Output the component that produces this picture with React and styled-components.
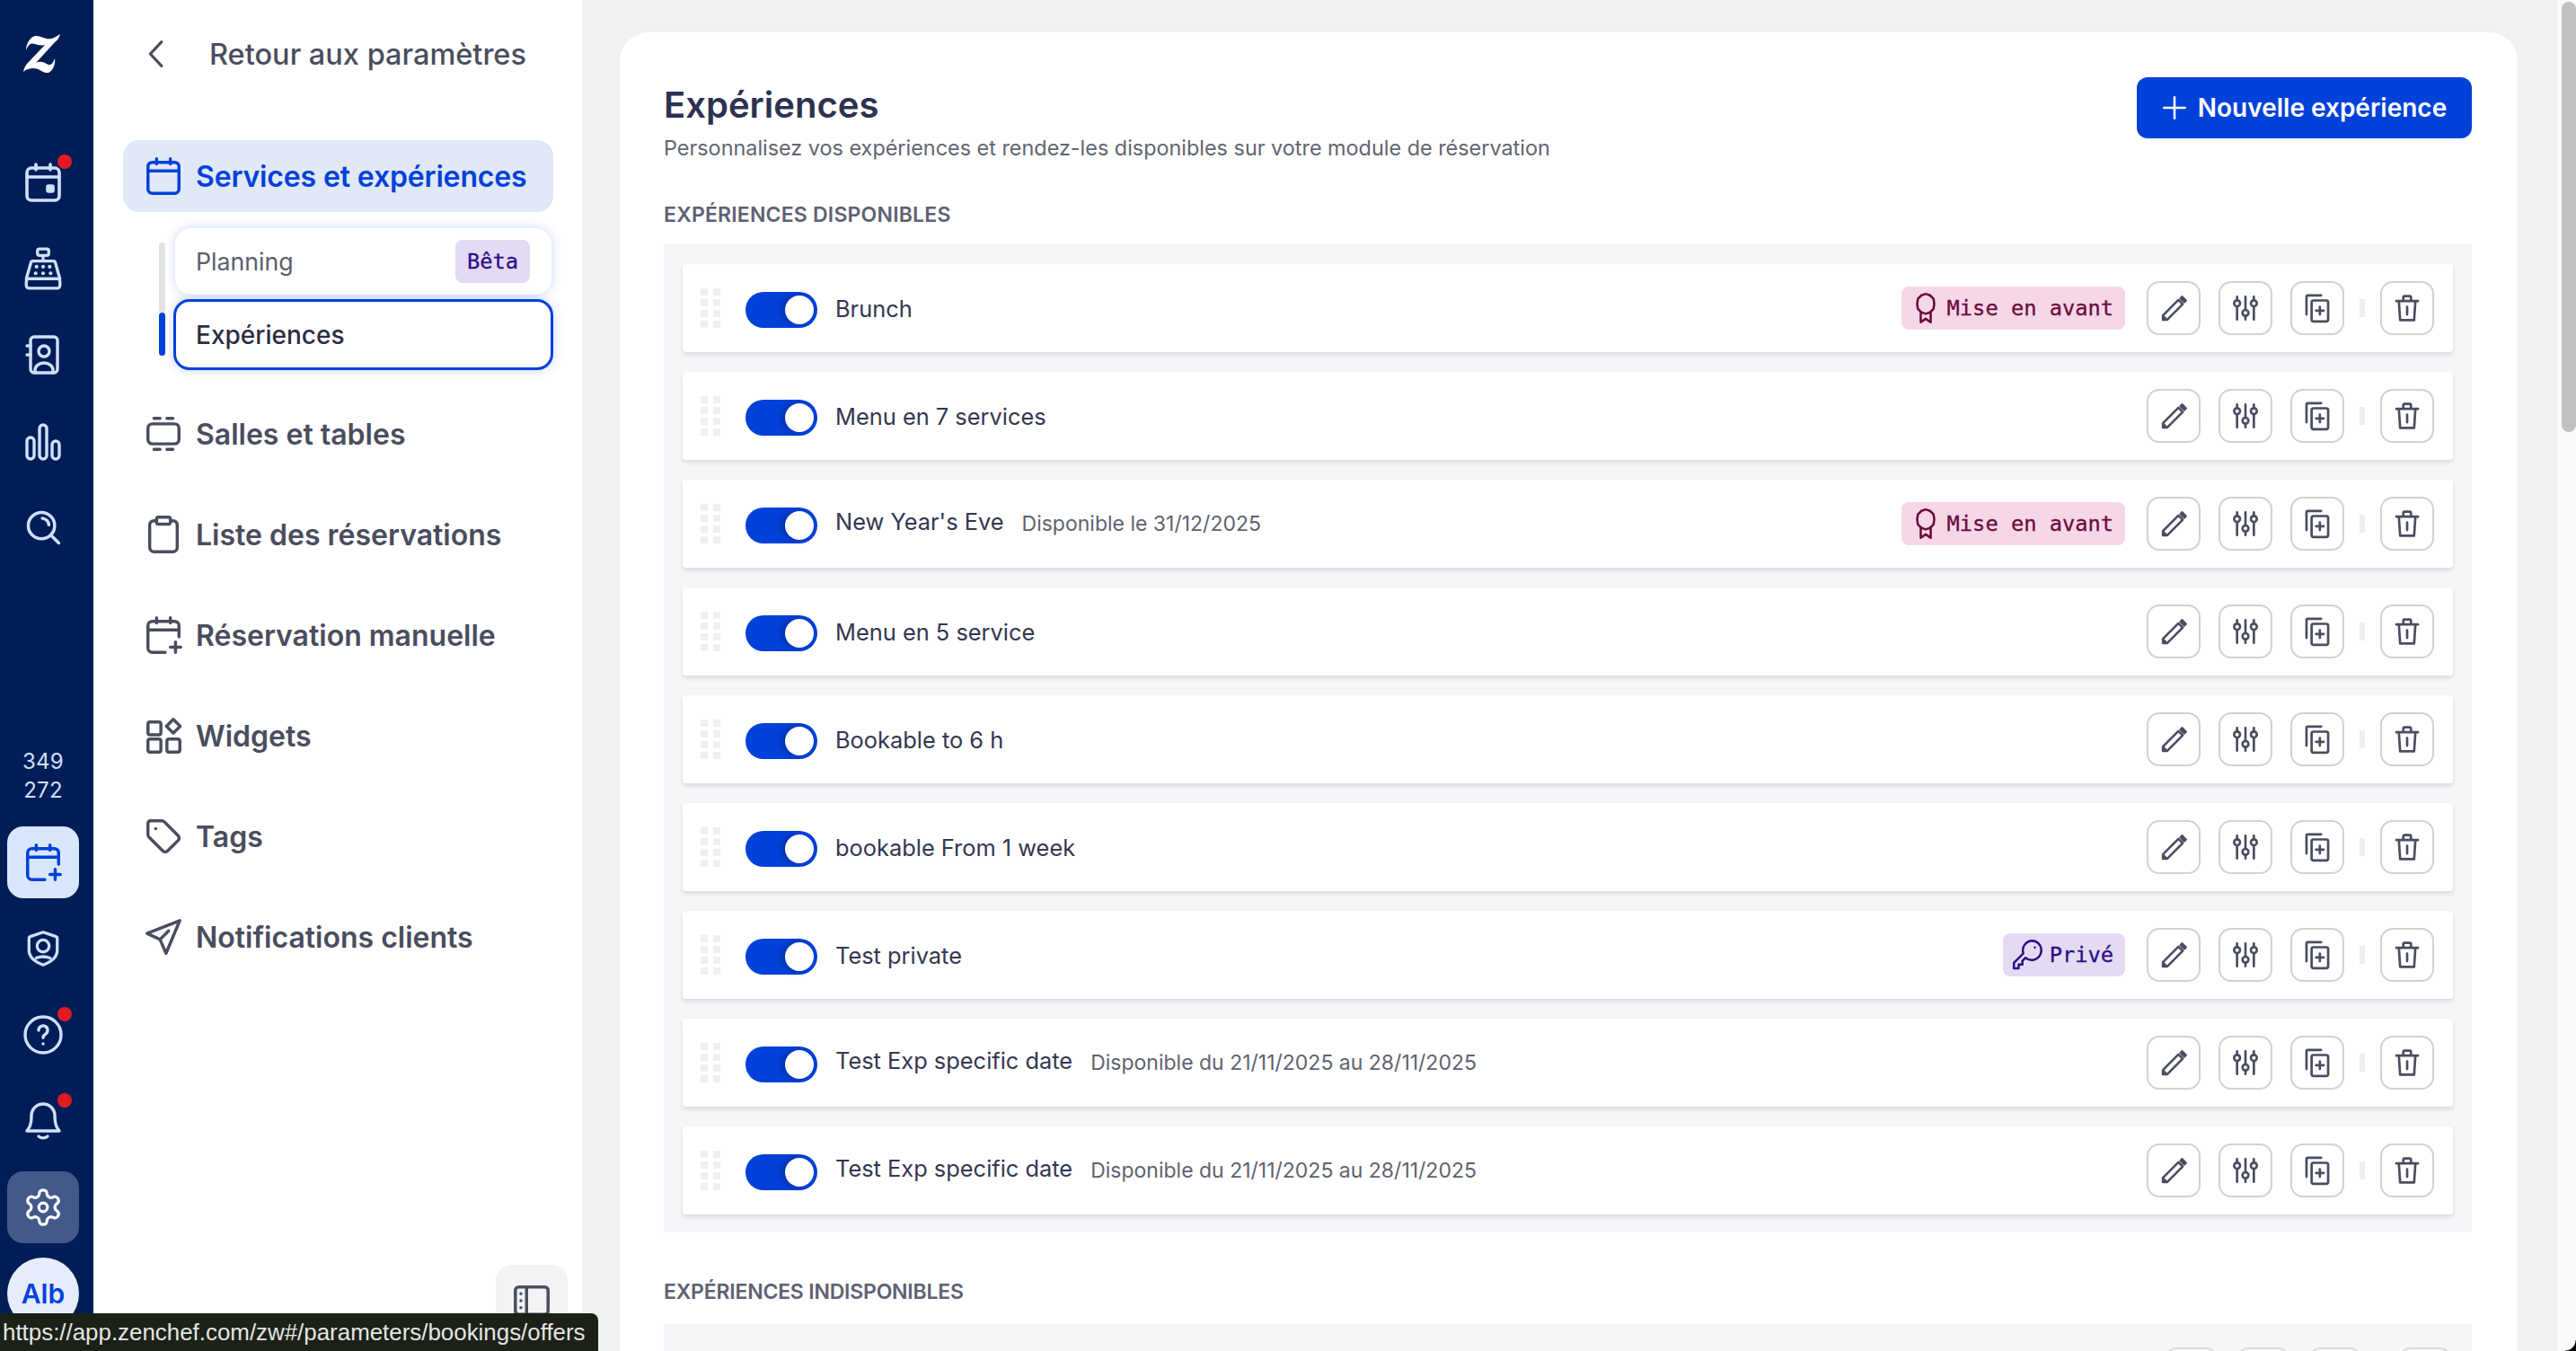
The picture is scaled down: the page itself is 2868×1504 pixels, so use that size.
import React from 'react';
import styled, { createGlobalStyle } from 'styled-components';

const GlobalStyle = createGlobalStyle`
  html, body { margin: 0; padding: 0; height: 100%; }
  body { font-family: Inter, "Noto Sans", sans-serif; background: #f0f1f3; overflow: hidden; }
  * { box-sizing: border-box; }
`;

const Page = styled.div`
  position: relative;
  display: flex;
  width: 2868px;
  height: 1504px;
  overflow: hidden;
  background: #f0f1f3;
`;

/* rail */
const Rail = styled.nav`
  flex: 0 0 104px;
  display: flex;
  flex-direction: column;
  justify-content: space-between;
  align-items: center;
  background: #011d57;
  padding: 36px 8px 24px 0;
  color: #cfe0fa;
`;
const RailGroup = styled.div`
  display: flex;
  flex-direction: column;
  align-items: center;
  gap: 16px;
`;
const LogoSlot = styled.div`
  height: 48px;
  margin-bottom: 63px;
  display: flex;
  align-items: center;
`;
const RailSlot = styled.div`
  position: relative;
  width: 80px;
  height: 80px;
  display: flex;
  align-items: center;
  justify-content: center;
  border-radius: 18px;
  color: ${p => (p.$variant === 'on' ? '#0041d9' : p.$variant === 'settings' ? '#ffffff' : '#cfe0fa')};
  background: ${p => (p.$variant === 'on' ? '#d8e7fc' : p.$variant === 'settings' ? '#43598a' : 'transparent')};
`;
const Dot = styled.span`
  position: absolute;
  top: 9px;
  right: 8px;
  width: 16px;
  height: 16px;
  border-radius: 50%;
  background: #e01b22;
`;
const Counter = styled.div`
  font-size: 24px;
  line-height: 32px;
  letter-spacing: 0.2px;
  text-align: center;
  margin-bottom: 8px;
`;
const Avatar = styled.div`
  width: 80px;
  height: 80px;
  border-radius: 50%;
  background: #e6edfa;
  color: #0041d9;
  font-size: 30px;
  font-weight: 600;
  display: flex;
  align-items: center;
  justify-content: center;
`;

/* settings sidebar */
const Side = styled.aside`
  flex: 0 0 544px;
  display: flex;
  flex-direction: column;
  background: #fff;
  color: #4a4d5e;
`;
const BackRow = styled.div`
  height: 120px;
  margin-bottom: 36px;
  padding-left: 50px;
  display: flex;
  align-items: center;
  gap: 39px;
  font-size: 32.5px;
  font-weight: 500;
`;
const NavList = styled.div`
  width: 479px;
  margin-left: 33px;
  display: flex;
  flex-direction: column;
`;
const NavItem = styled.div`
  height: 80px;
  margin-bottom: ${p => (p.$active ? '18px' : '32px')};
  padding-left: 22px;
  display: flex;
  align-items: center;
  gap: 13px;
  border-radius: 18px;
  font-size: 32px;
  font-weight: 600;
  letter-spacing: ${p => (p.$active ? '-0.15px' : '0')};
  color: ${p => (p.$active ? '#0041d9' : '#4a4d5e')};
  background: ${p => (p.$active ? '#e1e8f6' : 'transparent')};
`;
const SubGroup = styled.div`
  display: flex;
  margin-bottom: 31px;
  padding-left: 40px;
`;
const Track = styled.div`
  width: 7px;
  margin-top: 16px;
  margin-bottom: 16px;
  display: flex;
  flex-direction: column;
`;
const TrackPart = styled.div`
  flex: ${p => (p.$on ? '0 0 48px' : '1')};
  border-radius: 4px;
  background: ${p => (p.$on ? '#0041d9' : '#e2e2e4')};
`;
const SubList = styled.div`
  flex: 1;
  margin-left: 9px;
  display: flex;
  flex-direction: column;
  gap: 5px;
`;
const SubItem = styled.div`
  height: ${p => (p.$active ? '79px' : '74px')};
  margin: ${p => (p.$active ? '0' : '0 2px')};
  padding: 0 ${p => (p.$active ? '22px' : '24px')} 0 ${p => (p.$active ? '22px' : '23px')};
  display: flex;
  align-items: center;
  justify-content: space-between;
  border-radius: 18px;
  background: #fff;
  border: ${p => (p.$active ? '3px solid #0041d9' : 'none')};
  box-shadow: 0 0 12px rgba(0, 65, 217, 0.22);
  font-size: ${p => (p.$active ? '28px' : '26.7px')};
  font-weight: ${p => (p.$active ? 500 : 400)};
  color: ${p => (p.$active ? '#2b2e41' : '#5a5d6c')};
`;
const Badge = styled.span`
  height: 48px;
  padding: 0 13px;
  display: inline-flex;
  align-items: center;
  flex: none;
  border-radius: 8px;
  font-family: "DejaVu Sans Mono", "Liberation Mono", monospace;
  font-size: 23.7px;
  -webkit-text-stroke: 0.3px currentColor;
  background: ${p => (p.$pink ? '#f6d7e7' : '#e4daf4')};
  color: ${p => (p.$pink ? '#6b0a3d' : '#2a0f85')};
  margin-right: ${p => (p.$inRow ? '4px' : '0')};
`;
const BadgeIcon = styled.span`
  display: flex;
  margin: 0 ${p => p.$after} 0 ${p => p.$before};
`;
const CollapseBtn = styled.div`
  width: 80px;
  height: 80px;
  margin: auto 16px 16px auto;
  display: flex;
  align-items: center;
  justify-content: center;
  border-radius: 18px;
  background: #f3f3f5;
  color: #4a4d5e;
`;

/* content */
const Main = styled.main`
  flex: 1;
  min-width: 0;
  padding: 36px 43px 0 42px;
`;
const Card = styled.section`
  height: 1600px;
  padding: 50px 51px 0 49px;
  background: #fff;
  border-radius: 32px 32px 0 0;
`;
const Head = styled.header`
  display: flex;
  justify-content: space-between;
  align-items: flex-start;
`;
const Title = styled.h1`
  margin: 2px 0 0;
  font-size: 40px;
  line-height: 58px;
  font-weight: 600;
  color: #2d3150;
`;
const Subtitle = styled.p`
  margin: 0;
  font-size: 23.4px;
  line-height: 38px;
  color: #62656f;
`;
const PrimaryBtn = styled.button`
  width: 373px;
  height: 68px;
  border: 0;
  border-radius: 12px;
  display: flex;
  align-items: center;
  justify-content: center;
  gap: 12px;
  background: #0041d9;
  color: #fff;
  font-family: inherit;
  font-size: 28px;
  font-weight: 600;
`;
const SectionLabel = styled.h2`
  margin: ${p => (p.$second ? '52px' : '41px')} 0 ${p => (p.$second ? '22px' : '19px')};
  font-size: 23px;
  line-height: 28px;
  font-weight: 600;
  letter-spacing: ${p => (p.$second ? '-0.2px' : '0.2px')};
  text-transform: uppercase;
  color: #5d6172;
`;
const RowList = styled.div`
  display: flex;
  flex-direction: column;
  gap: 22px;
  padding: 22px 21px 20px;
  background: #f5f6f8;
`;
const Row = styled.div`
  height: 98px;
  padding: 0 21px 0 20px;
  display: flex;
  align-items: center;
  background: #fff;
  border-radius: 4px;
  box-shadow: 0 3px 5px rgba(30, 30, 50, 0.13);
`;
const Handle = styled.div`
  flex: none;
  display: grid;
  grid-template-columns: repeat(2, 8px);
  grid-auto-rows: 8px;
  gap: 4px 6px;
  margin-right: 28px;
  span { background: #eeeff1; border-radius: 1px; }
`;
const Toggle = styled.div`
  flex: none;
  width: 80px;
  height: 40px;
  margin: 4px 20px 0 0;
  padding: 4px;
  display: flex;
  justify-content: flex-end;
  border-radius: 20px;
  background: #0041d9;
  &::after {
    content: '';
    width: 32px;
    height: 32px;
    border-radius: 50%;
    background: #fff;
    box-shadow: -4px 0 6px rgba(0, 20, 90, 0.35);
  }
`;
const RowName = styled.span`
  font-size: 25.4px;
  color: #33374f;
  padding-bottom: ${p => (p.$raised ? '6px' : '0')};
`;
const RowNote = styled.span`
  margin-left: 20px;
  font-size: 23px;
  color: #5f6270;
`;
const RowEnd = styled.div`
  margin-left: auto;
  display: flex;
  align-items: center;
  gap: 20px;
`;
const ActionBtn = styled.div`
  width: 60px;
  height: 60px;
  display: flex;
  align-items: center;
  justify-content: center;
  border: 2px solid #d2d2d4;
  border-radius: 14px;
  background: #fff;
  color: #4a4d60;
`;
const Divider = styled.div`
  width: 6px;
  height: 20px;
  margin: 0 -3px;
  background: #eeeef0;
`;
const GhostList = styled.div`
  height: 120px;
  padding: 26px 22px 0;
  display: flex;
  background: #f5f6f8;
`;
const GhostActions = styled(RowEnd)`
  align-self: flex-start;
  opacity: 0.7;
`;

/* scrollbar */
const ScrollTrack = styled.div`
  flex: 0 0 22px;
  padding: 2px 0 0 5px;
  background: #fafafa;
  border-left: 1px solid #eeeef0;
`;
const ScrollThumb = styled.div`
  height: 479px;
  border-radius: 8px;
  background: #c1c1c1;
`;

/* overlays */
const StatusBar = styled.div`
  position: absolute;
  left: 0;
  bottom: 0;
  width: 666px;
  height: 42px;
  padding-left: 3px;
  display: flex;
  align-items: center;
  border-radius: 0 8px 0 0;
  background: #1c2118;
  color: #e3e6e3;
  font-family: "Liberation Sans", Arial, sans-serif;
  font-size: 25.9px;
  white-space: nowrap;
`;
const WindowCorner = styled.div`
  position: absolute;
  right: 0;
  bottom: 0;
  width: 12px;
  height: 12px;
  background: radial-gradient(circle at top left, transparent 11px, #000 12px);
`;

/* icons */
const Svg = ({ w = 24, h, vb = '0 0 24 24', sw = 1.8, children }) => (
  <svg width={w} height={h || w} viewBox={vb} fill="none" stroke="currentColor" strokeWidth={sw} strokeLinecap="round" strokeLinejoin="round" style={{ flex: 'none' }}>
    {children}
  </svg>
);

const Logo = () => (
  <svg width="44" height="44" viewBox="0 0 44 44" fill="#fff">
    <path d="M3 18C3 10 8 3 13 2C20 1 26 8 34 4L41 0C40 4 38 7 35 9L14 32C19 29 24 32 28 34C31 35 33 32 35 27C36 33 33 41 28 43C22 44 18 38 11 38C7 38 3 39 0 42C0 39 2 36 4 33L24 12C18 14 10 9 8 11C6 12 4 15 3 18Z" />
  </svg>
);
const CalendarIcon = ({ w = 46, dot }) => (
  <Svg w={w}>
    <rect x="3" y="4" width="18" height="18" rx="2.500" />
    <path d="M3 9h18M8 2v3M16 2v3" />
    {dot && <rect x="14.500" y="14" width="3" height="3" rx="0.500" fill="currentColor" />}
  </Svg>
);
const CalendarPlusIcon = ({ w = 46 }) => (
  <Svg w={w}>
    <path d="M21 13V6.500A2.500 2.500 0 0 0 18.500 4h-13A2.500 2.500 0 0 0 3 6.500v13A2.500 2.500 0 0 0 5.500 22H13" />
    <path d="M3 9h18M8 2v3M16 2v3M19 16v6M16 19h6" />
  </Svg>
);
const RegisterIcon = () => (
  <Svg w={50} sw={1.600}>
    <rect x="9" y="1.500" width="6" height="3.500" rx="1" />
    <path d="M12 5v3M6.500 8h11a1 1 0 0 1 1 .8L21 17.500H3L5.500 8.800a1 1 0 0 1 1-.8z" />
    <rect x="3" y="17.500" width="18" height="5" rx="1.500" />
    <path d="M8.500 11h.01M12 11h.01M15.500 11h.01M8 14.500h.01M12 14.500h.01M16 14.500h.01" strokeWidth="2" />
  </Svg>
);
const ContactsIcon = () => (
  <Svg w={48} sw={1.700}>
    <rect x="5" y="2" width="15" height="20" rx="2" />
    <circle cx="12.500" cy="10" r="3" />
    <path d="M7.500 22v-1.500a5 4 0 0 1 10 0V22M3 7h2M3 12h2" />
  </Svg>
);
const ChartIcon = () => (
  <Svg w={48} sw={1.700}>
    <rect x="3" y="10" width="4" height="12" rx="2" />
    <rect x="10" y="3" width="4" height="19" rx="2" />
    <rect x="17" y="12" width="4" height="10" rx="2" />
  </Svg>
);
const SearchIcon = () => (
  <Svg w={44} sw={1.900}>
    <circle cx="11" cy="11" r="8" />
    <path d="M17 17l4.500 4.500M11.500 6.500a4.500 4.500 0 0 1 4 4" />
  </Svg>
);
const ShieldIcon = () => (
  <Svg w={46} sw={1.700}>
    <path d="M12 2.500l7.500 2.500a1 1 0 0 1 .7 1v7c0 3.500-3 6.500-8.200 8.500-5.200-2-8.200-5-8.200-8.500V6a1 1 0 0 1 .7-1z" />
    <circle cx="12" cy="10.500" r="3.500" />
    <path d="M8 17.500c2.500-1 5.500-1 8 0" />
  </Svg>
);
const HelpIcon = () => (
  <Svg w={48} sw={1.700}>
    <circle cx="12" cy="12" r="10" />
    <path d="M9.500 9.500a2.500 2.500 0 1 1 3.800 2.100c-.8.500-1.300 1-1.300 2M12 17h.01" />
  </Svg>
);
const BellIcon = () => (
  <Svg w={48} sw={1.700}>
    <path d="M12 2.500a6.500 6.500 0 0 0-6.500 6.500c0 5-1 6.500-2.500 8.500h18c-1.500-2-2.500-3.500-2.500-8.500A6.500 6.500 0 0 0 12 2.500zM9.500 20.500c1.500 1.200 3.500 1.200 5 0" />
  </Svg>
);
const GearIcon = () => (
  <Svg w={46} sw={1.700}>
    <path d="M12.220 2h-.44a2 2 0 0 0-2 2v.18a2 2 0 0 1-1 1.730l-.43.250a2 2 0 0 1-2 0l-.15-.080a2 2 0 0 0-2.730.730l-.220.380a2 2 0 0 0 .730 2.730l.150.100a2 2 0 0 1 1 1.720v.510a2 2 0 0 1-1 1.740l-.150.090a2 2 0 0 0-.730 2.730l.220.380a2 2 0 0 0 2.730.730l.150-.080a2 2 0 0 1 2 0l.430.250a2 2 0 0 1 1 1.730V20a2 2 0 0 0 2 2h.440a2 2 0 0 0 2-2v-.180a2 2 0 0 1 1-1.730l.430-.250a2 2 0 0 1 2 0l.150.080a2 2 0 0 0 2.730-.730l.220-.390a2 2 0 0 0-.730-2.730l-.150-.080a2 2 0 0 1-1-1.740v-.500a2 2 0 0 1 1-1.740l.150-.090a2 2 0 0 0 .730-2.730l-.220-.380a2 2 0 0 0-2.730-.730l-.150.080a2 2 0 0 1-2 0l-.430-.250a2 2 0 0 1-1-1.730V4a2 2 0 0 0-2-2z" />
    <circle cx="12" cy="12" r="2.500" />
  </Svg>
);
const ChevronLeft = () => (
  <Svg w={40} sw={1.900}><path d="M15.500 4L8 12l7.500 8" /></Svg>
);
const TableIcon = () => (
  <Svg w={46}>
    <rect x="3" y="6.200" width="18" height="11.600" rx="2.500" />
    <path d="M6.500 3h3.500M14 3h3.500M6.500 21h3.500M14 21h3.500" />
  </Svg>
);
const ClipboardIcon = () => (
  <Svg w={46}>
    <rect x="4" y="4" width="16" height="18" rx="2.500" />
    <rect x="8" y="2" width="8" height="4" rx="1" fill="#fff" />
  </Svg>
);
const WidgetIcon = () => (
  <Svg w={46}>
    <rect x="3" y="4" width="7.500" height="7.500" rx="1.200" />
    <rect x="3" y="14" width="7.500" height="7.500" rx="1.200" />
    <rect x="14" y="14" width="7.500" height="7.500" rx="1.200" />
    <path d="M17.700 2.500l4 4-4 4-4-4z" />
  </Svg>
);
const TagIcon = () => (
  <Svg w={46}>
    <path d="M3 4.500A1.500 1.500 0 0 1 4.500 3h6.600a2 2 0 0 1 1.400.6l8 8a2 2 0 0 1 0 2.800l-6.100 6.100a2 2 0 0 1-2.800 0l-8-8a2 2 0 0 1-.6-1.400z" />
    <path d="M7.500 7.500h.01" />
  </Svg>
);
const SendIcon = () => (
  <Svg w={46}>
    <path d="M21.500 2.500L2.500 10l7.500 3.500 3.500 8zM10 13.500l5-5" />
  </Svg>
);
const PanelIcon = () => (
  <Svg w={46}>
    <rect x="2.500" y="4" width="19" height="16" rx="2" />
    <path d="M9 4v16M5.700 8h.01M5.700 12h.01M5.700 16h.01" />
  </Svg>
);
const PlusIcon = () => (
  <Svg w={28} sw={2.200}><path d="M12 2v20M2 12h20" /></Svg>
);
const PencilIcon = () => (
  <Svg w={33} sw={1.900}>
    <path d="M3 21v-3.500L15.500 5l3.500 3.500L6.500 21zM3 18l3 3" />
    <path d="M18.500 2.500l3 3-1.200 1.200-3-3z" fill="currentColor" />
  </Svg>
);
const SlidersIcon = () => (
  <Svg w={32} sw={2}>
    <path d="M5 2.500v3M5 11v10.500M12 2.500v11M12 19v2.500M19 2.500v3M19 11v10.500" />
    <circle cx="5" cy="8" r="2.500" />
    <circle cx="12" cy="16" r="2.500" />
    <circle cx="19" cy="8" r="2.500" />
  </Svg>
);
const CopyPlusIcon = () => (
  <Svg w={34} sw={1.900}>
    <rect x="7.500" y="6" width="13" height="16.500" rx="1.500" />
    <path d="M3.500 17V3a1 1 0 0 1 1-1h10.500M14 11v6M11 14h6" />
  </Svg>
);
const TrashIcon = () => (
  <Svg w={34} sw={1.900}>
    <path d="M3.500 6.500h17M5.500 6.500l1 15h11l1-15M9 6.500V3.500a1 1 0 0 1 1-1h4a1 1 0 0 1 1 1v3M12 11v6" />
  </Svg>
);
const RibbonIcon = () => (
  <Svg w={38} sw={1.600}>
    <path d="M12 2l3 1 2.500 2.500.5 3.500-.5 3.500L15 15l-3 1-3-1-2.500-2.500L6 9l.5-3.500L9 3z" />
    <path d="M8.500 15.200V22l3.500-2.500 3.500 2.500v-6.800" />
  </Svg>
);
const KeyIcon = () => (
  <Svg w={40} sw={1.500}>
    <path d="M15 2.500a6.500 6.500 0 0 0-6.200 8.500L2.500 17.300V21h3.200v-2.500h2.500V16l2-2a6.500 6.500 0 1 0 4.800-11.500z" />
    <path d="M16.500 7h.01" />
  </Svg>
);

const rows = [
  { name: 'Brunch', badge: 'pink' },
  { name: 'Menu en 7 services' },
  { name: "New Year's Eve", note: 'Disponible le 31/12/2025', badge: 'pink' },
  { name: 'Menu en 5 service' },
  { name: 'Bookable to 6 h' },
  { name: 'bookable From 1 week' },
  { name: 'Test private', badge: 'key' },
  { name: 'Test Exp specific date', note: 'Disponible du 21/11/2025 au 28/11/2025' },
  { name: 'Test Exp specific date', note: 'Disponible du 21/11/2025 au 28/11/2025' },
];

const navItems = [
  { label: 'Salles et tables', icon: <TableIcon /> },
  { label: 'Liste des réservations', icon: <ClipboardIcon /> },
  { label: 'Réservation manuelle', icon: <CalendarPlusIcon /> },
  { label: 'Widgets', icon: <WidgetIcon /> },
  { label: 'Tags', icon: <TagIcon /> },
  { label: 'Notifications clients', icon: <SendIcon /> },
];

const Actions = () => (
  <>
    <ActionBtn><PencilIcon /></ActionBtn>
    <ActionBtn><SlidersIcon /></ActionBtn>
    <ActionBtn><CopyPlusIcon /></ActionBtn>
    <Divider />
    <ActionBtn><TrashIcon /></ActionBtn>
  </>
);

const App = () => (
  <Page>
    <GlobalStyle />
    <Rail>
      <RailGroup>
        <LogoSlot><Logo /></LogoSlot>
        <RailSlot><CalendarIcon w={48} dot /><Dot /></RailSlot>
        <RailSlot><RegisterIcon /></RailSlot>
        <RailSlot><ContactsIcon /></RailSlot>
        <RailSlot><ChartIcon /></RailSlot>
        <RailSlot><SearchIcon /></RailSlot>
      </RailGroup>
      <RailGroup>
        <Counter>349<br />272</Counter>
        <RailSlot $variant="on"><CalendarPlusIcon w={46} /></RailSlot>
        <RailSlot><ShieldIcon /></RailSlot>
        <RailSlot><HelpIcon /><Dot /></RailSlot>
        <RailSlot><BellIcon /><Dot /></RailSlot>
        <RailSlot $variant="settings"><GearIcon /></RailSlot>
        <Avatar>Alb</Avatar>
      </RailGroup>
    </Rail>

    <Side>
      <BackRow><ChevronLeft />Retour aux paramètres</BackRow>
      <NavList>
        <NavItem $active><CalendarIcon />Services et expériences</NavItem>
        <SubGroup>
          <Track><TrackPart /><TrackPart $on /></Track>
          <SubList>
            <SubItem>Planning<Badge>Bêta</Badge></SubItem>
            <SubItem $active>Expériences</SubItem>
          </SubList>
        </SubGroup>
        {navItems.map(item => (
          <NavItem key={item.label}>{item.icon}{item.label}</NavItem>
        ))}
      </NavList>
      <CollapseBtn><PanelIcon /></CollapseBtn>
    </Side>

    <Main>
      <Card>
        <Head>
          <div>
            <Title>Expériences</Title>
            <Subtitle>Personnalisez vos expériences et rendez-les disponibles sur votre module de réservation</Subtitle>
          </div>
          <PrimaryBtn><PlusIcon />Nouvelle expérience</PrimaryBtn>
        </Head>
        <SectionLabel>Expériences disponibles</SectionLabel>
        <RowList>
          {rows.map((row, i) => (
            <Row key={i}>
              <Handle>{Array.from({ length: 8 }, (_, d) => <span key={d} />)}</Handle>
              <Toggle />
              <RowName $raised={!!row.note}>{row.name}</RowName>
              {row.note && <RowNote>{row.note}</RowNote>}
              <RowEnd>
                {row.badge === 'pink' && <Badge $pink $inRow><BadgeIcon $before="-5px" $after="5px"><RibbonIcon /></BadgeIcon>Mise en avant</Badge>}
                {row.badge === 'key' && <Badge $inRow><BadgeIcon $before="-5px" $after="4px"><KeyIcon /></BadgeIcon>Privé</Badge>}
                <Actions />
              </RowEnd>
            </Row>
          ))}
        </RowList>
        <SectionLabel $second>Expériences indisponibles</SectionLabel>
        <GhostList><GhostActions><Actions /></GhostActions></GhostList>
      </Card>
    </Main>

    <ScrollTrack><ScrollThumb /></ScrollTrack>

    <StatusBar>https://app.zenchef.com/zw#/parameters/bookings/offers</StatusBar>
    <WindowCorner />
  </Page>
);

export default App;
